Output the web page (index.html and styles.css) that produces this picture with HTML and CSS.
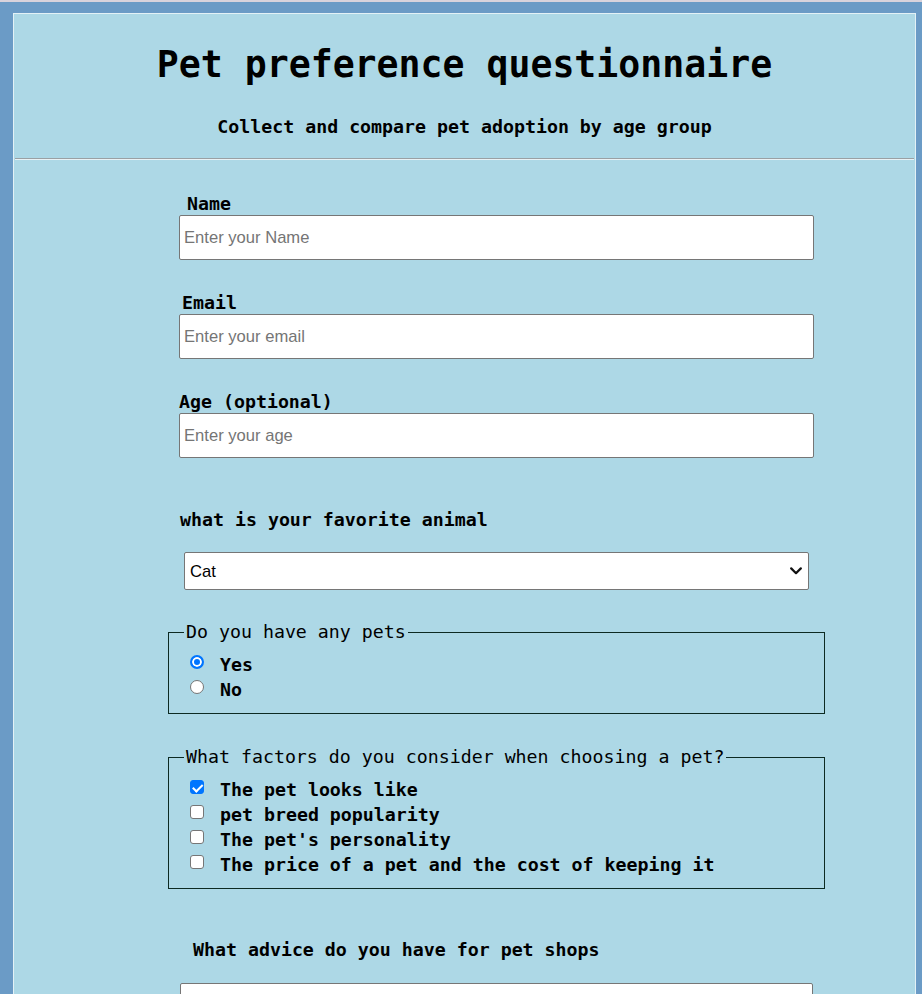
FILE: index.html
```html
<!DOCTYPE html>
<html lang="en">
<head>
<meta charset="utf-8">
<title>Pet preference questionnaire</title>
<link rel="stylesheet" href="styles.css">
</head>
<body>
<div class="page">
  <header class="header">
    <h1 class="title">Pet preference questionnaire</h1>
    <p class="subtitle">Collect and compare pet adoption by age group</p>
  </header>
  <hr class="rule">
  <form class="form">
    <div class="field">
      <label class="label pad-name" for="name">Name</label>
      <input class="text-input" id="name" type="text" placeholder="Enter your Name">
    </div>
    <div class="field">
      <label class="label pad-email" for="email">Email</label>
      <input class="text-input" id="email" type="email" placeholder="Enter your email">
    </div>
    <div class="field">
      <label class="label" for="age">Age (optional)</label>
      <input class="text-input" id="age" type="number" placeholder="Enter your age">
    </div>
    <div class="field field-select">
      <label class="label pad-animal" for="animal">what is your favorite animal</label>
      <div class="select-wrap">
        <select class="select" id="animal">
          <option>Cat</option>
          <option>Dog</option>
          <option>Bird</option>
        </select>
        <svg class="chevron" width="12" height="8" viewBox="0 0 12 8" aria-hidden="true">
          <path d="M1.2 1.4 L6 6.2 L10.8 1.4" fill="none" stroke="#111" stroke-width="2.2" stroke-linecap="round" stroke-linejoin="round"/>
        </svg>
      </div>
    </div>
    <fieldset class="group group-first">
      <legend class="legend">Do you have any pets</legend>
      <div class="option"><input class="choice radio" type="radio" name="pets" id="yes" checked><label class="option-label" for="yes">Yes</label></div>
      <div class="option"><input class="choice radio" type="radio" name="pets" id="no"><label class="option-label" for="no">No</label></div>
    </fieldset>
    <fieldset class="group">
      <legend class="legend">What factors do you consider when choosing a pet?</legend>
      <div class="option"><input class="choice check" type="checkbox" id="f1" checked><label class="option-label" for="f1">The pet looks like</label></div>
      <div class="option"><input class="choice check" type="checkbox" id="f2"><label class="option-label" for="f2">pet breed popularity</label></div>
      <div class="option"><input class="choice check" type="checkbox" id="f3"><label class="option-label" for="f3">The pet's personality</label></div>
      <div class="option"><input class="choice check" type="checkbox" id="f4"><label class="option-label" for="f4">The price of a pet and the cost of keeping it</label></div>
    </fieldset>
    <div class="field field-advice">
      <label class="label pad-advice" for="advice">What advice do you have for pet shops</label>
      <textarea class="textarea" id="advice" rows="4"></textarea>
    </div>
  </form>
</div>
</body>
</html>
```
FILE: styles.css
```css
html, body {
  margin: 0;
}
body {
  background: #6b9bc6;
  border-top: 2px solid #d9d3dc;
  padding-top: 11px;
  font-family: "DejaVu Sans Mono", monospace;
  font-size: 18.25px;
  color: #000;
}
.page {
  margin-left: 13px;
  width: 901px;
  min-height: 1100px;
  background: #add8e6;
  border: 1px solid #e3f1f6;
  border-bottom: none;
}
.header {
  text-align: center;
  padding-top: 29px;
}
.title {
  margin: 0;
  font-size: 36.5px;
  line-height: 44px;
  font-weight: bold;
}
.subtitle {
  margin: 29px 0 0;
  font-size: 18.25px;
  line-height: 22px;
  font-weight: bold;
}
.rule {
  margin: 20px 1px 0;
  height: 0;
  border: 0;
  border-top: 1px solid #9aa0a4;
  border-bottom: 1px solid #e8f2f6;
}
.form {
  margin-left: 165px;
  width: 635px;
  padding-top: 33px;
  padding-bottom: 40px;
}
.field {
  margin-bottom: 32px;
}
.field-select {
  margin-top: 51px;
}
.label {
  display: block;
  line-height: 22px;
  font-weight: bold;
}
.pad-name { padding-left: 8px; }
.pad-email { padding-left: 3px; }
.pad-animal { padding-left: 1px; }
.pad-advice { padding-left: 14px; }
.text-input {
  display: block;
  box-sizing: border-box;
  width: 100%;
  height: 45px;
  margin: 0;
  padding: 0 4px;
  border: 1px solid #767676;
  border-radius: 2px;
  background: #fff;
  font-family: "Liberation Sans", Arial, sans-serif;
  font-size: 16.6px;
  color: #000;
}
.text-input::placeholder {
  color: #757575;
}
.select-wrap {
  position: relative;
  width: 625px;
  margin: 21px 5px 0;
}
.select {
  display: block;
  box-sizing: border-box;
  width: 100%;
  height: 38px;
  margin: 0;
  padding: 0 5px;
  border: 1px solid #767676;
  border-radius: 2px;
  background: #fff;
  font-family: "Liberation Sans", Arial, sans-serif;
  font-size: 16.6px;
  color: #000;
  -webkit-appearance: none;
  appearance: none;
}
.chevron {
  position: absolute;
  right: 7px;
  top: 15px;
  pointer-events: none;
}
.group {
  margin: 32px -11px 0;
  padding: 9px 15px 11px;
  border: 1px solid #0c2a22;
}
.group-first {
  margin-top: -1px;
}
.legend {
  padding: 0 2px;
  line-height: 22px;
  font-weight: normal;
}
.option {
  line-height: 25px;
  font-weight: bold;
}
.choice {
  -webkit-appearance: none;
  appearance: none;
  position: relative;
  box-sizing: border-box;
  width: 14px;
  height: 14px;
  margin: 0 16px 2px 6px;
  vertical-align: baseline;
  border: 1px solid #767676;
  background: #fff;
}
.radio {
  border-radius: 50%;
}
.radio:checked {
  border: 2px solid #0075ff;
  background: #0075ff;
  box-shadow: inset 0 0 0 2px #fff;
}
.check {
  border-radius: 3px;
}
.check:checked {
  border-color: #0075ff;
  background: #0075ff;
}
.check:checked::after {
  content: "";
  position: absolute;
  left: 3.5px;
  top: 0.5px;
  width: 3.5px;
  height: 7.5px;
  border: solid #fff;
  border-width: 0 2px 2px 0;
  transform: rotate(45deg);
}
.field-advice {
  margin-top: 50px;
}
.textarea {
  display: block;
  box-sizing: border-box;
  width: 633px;
  height: 90px;
  margin: 22px 1px 0;
  border: 1px solid #767676;
  border-radius: 2px;
  background: #fff;
}
```
